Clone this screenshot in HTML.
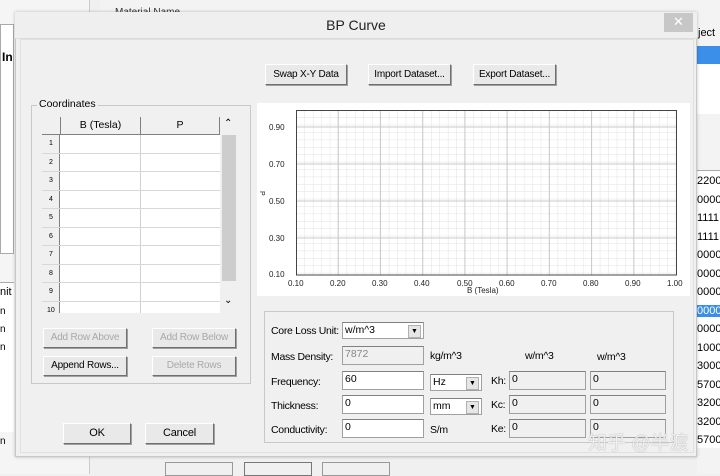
<!DOCTYPE html>
<html><head><meta charset="utf-8"><style>
*{box-sizing:border-box;margin:0;padding:0}
body{width:720px;height:474px;overflow:hidden;background:#f0f0f0;font-family:"Liberation Sans",Arial,sans-serif;font-size:10px;color:#000;position:relative;white-space:nowrap}
.a{position:absolute}
.btn{position:absolute;background:#e9e9e9;border:1px solid #fff;border-right-color:#707070;border-bottom-color:#707070;box-shadow:1px 1px 0 #a0a0a0;text-align:center;font-size:10px;letter-spacing:-0.2px;white-space:nowrap;overflow:hidden}
.dis{color:#a8a8a8}
.fld{position:absolute;background:#fff;border:1px solid #a0a0a0;border-top-color:#808080;padding:1px 2px;font-size:10.5px}
.gf{background:#f0f0f0}
.dd{position:absolute;width:13px;height:13px;right:2px;top:2px;background:#e6e6e6;border:1px solid #b0b0b0;font-size:7px;text-align:center;line-height:11px}
.l{position:absolute;font-size:10.5px;letter-spacing:-0.3px}
</style></head><body>
<div class="a" style="left:0;top:0;width:90px;height:474px;background:#f5f5f5;border-right:1px solid #ccc"></div>
<div class="a" style="left:0;top:24px;width:14px;height:230px;background:#fff;border:1px solid #aaa"></div>
<div class="a" style="left:2px;top:50px;font-weight:bold;font-size:12px">In</div>
<div class="a" style="left:0;top:282px;width:14px;height:150px;background:#fff;border-top:1px solid #aaa"></div>
<div class="a" style="left:0;top:286px;font-size:11px">nit</div>
<div class="a" style="left:0;top:306px">n</div><div class="a" style="left:0;top:324px">n</div><div class="a" style="left:0;top:342px">n</div><div class="a" style="left:0;top:436px">n</div>
<div class="a" style="left:100px;top:0;width:620px;height:12px;background:#f3f3f3"></div>
<div class="a" style="left:115px;top:7px;font-size:10px;color:#333">Material Name</div>
<div class="a" style="left:697px;top:0;width:23px;height:474px;background:#f3f3f3"></div>
<div class="a" style="left:697px;top:46px;width:23px;height:18px;background:#3b8fe8"></div>
<div class="a" style="left:698px;top:27px;font-size:11px">ject</div>
<div class="a" style="left:697px;top:64px;width:23px;height:50px;background:#fff"></div>
<div class="a" style="left:697px;top:170px;width:23px;height:278px;background:#fff;border-top:1px solid #aaa"></div>
<div class="a" style="left:697px;top:172px;line-height:18.5px;font-size:11px">2200<br>0000<br>1111<br>1111<br>0000<br>0000<br>0000<br><span style="background:#3b8fe8;color:#fff">0000</span><br>0000<br>1000<br>3000<br>5700<br>3200<br>3200<br>5700</div>
<div class="a" style="left:165px;top:462px;width:68px;height:14px;border:1px solid #999"></div>
<div class="a" style="left:244px;top:462px;width:68px;height:14px;border:1px solid #777"></div>
<div class="a" style="left:322px;top:462px;width:68px;height:14px;border:1px solid #999"></div>
<div class="a" style="left:15px;top:12px;width:682px;height:445px;background:#f0f0f0;border:1px solid #c8c8c8;box-shadow:0 0 3px rgba(0,0,0,.25)"></div>
<div class="a" style="left:15px;top:12px;width:682px;height:27px;background:#efefef;border-bottom:1px solid #dcdcdc"></div>
<div class="a" style="left:0;top:17px;width:712px;text-align:center;font-size:14px;color:#222">BP Curve</div>
<div class="a" style="left:664px;top:13px;width:29px;height:19px;background:#c7c7c7;color:#fff;text-align:center;font-size:13px;line-height:18px">✕</div>
<div class="a" style="left:20px;top:39px;width:674px;height:414px;border:1px solid #e0e0e0"></div>
<div class="btn" style="left:265px;top:64px;width:82px;height:21px;line-height:19px">Swap X-Y Data</div>
<div class="btn" style="left:368px;top:64px;width:83px;height:21px;line-height:19px">Import Dataset...</div>
<div class="btn" style="left:473px;top:64px;width:83px;height:21px;line-height:19px">Export Dataset...</div>
<div class="a" style="left:31px;top:105px;width:220px;height:279px;border:1px solid #c8c8c8"></div>
<div class="a" style="left:37px;top:98px;background:#f0f0f0;padding:0 2px;font-size:10.5px">Coordinates</div>
<div class="a" style="left:42px;top:117px;width:196px;height:196px;background:#fff;overflow:hidden">
<div class="a" style="left:0;top:0;width:178px;height:18px;background:#f0f0f0;border-bottom:1px solid #808080"></div>
<div class="a" style="left:18px;top:0;width:80px;height:18px;border-left:1px solid #808080;text-align:center;line-height:17px;font-size:10.5px">B (Tesla)</div>
<div class="a" style="left:98px;top:0;width:80px;height:18px;border-left:1px solid #808080;border-right:1px solid #808080;text-align:center;line-height:17px;font-size:10.5px">P</div>
<div class="a" style="left:0;top:18px;width:18px;height:180px;background:#f0f0f0;border-right:1px solid #808080"></div>
<div class="a" style="left:98px;top:18px;width:1px;height:180px;background:#d0d0d0"></div>
<div class="a" style="left:178px;top:0;width:18px;height:196px;background:#f0f0f0"></div>
<div class="a" style="left:180px;top:18px;width:14px;height:146px;background:#cdcdcd"></div>
<div class="a" style="left:182px;top:1px;font-size:10px">⌃</div>
<div class="a" style="left:182px;top:178px;font-size:10px">⌄</div>
<div class="a" style="left:0;top:18px;width:178px;line-height:18.5px;font-size:7px">
<div style="border-bottom:1px solid #d8d8d8;height:18.5px;padding-left:7px">1</div><div style="border-bottom:1px solid #d8d8d8;height:18.5px;padding-left:7px">2</div><div style="border-bottom:1px solid #d8d8d8;height:18.5px;padding-left:7px">3</div><div style="border-bottom:1px solid #d8d8d8;height:18.5px;padding-left:7px">4</div><div style="border-bottom:1px solid #d8d8d8;height:18.5px;padding-left:7px">5</div><div style="border-bottom:1px solid #d8d8d8;height:18.5px;padding-left:7px">6</div><div style="border-bottom:1px solid #d8d8d8;height:18.5px;padding-left:7px">7</div><div style="border-bottom:1px solid #d8d8d8;height:18.5px;padding-left:7px">8</div><div style="border-bottom:1px solid #d8d8d8;height:18.5px;padding-left:7px">9</div><div style="height:18.5px;padding-left:5px">10</div></div>
</div>
<div class="btn dis" style="left:43px;top:328px;width:84px;height:20px;line-height:18px">Add Row Above</div>
<div class="btn dis" style="left:152px;top:328px;width:84px;height:20px;line-height:18px">Add Row Below</div>
<div class="btn" style="left:43px;top:356px;width:84px;height:20px;line-height:18px">Append Rows...</div>
<div class="btn dis" style="left:152px;top:356px;width:84px;height:20px;line-height:18px">Delete Rows</div>
<div class="btn" style="left:63px;top:423px;width:68px;height:21px;line-height:19px;font-size:11px">OK</div>
<div class="btn" style="left:145px;top:423px;width:69px;height:21px;line-height:19px;font-size:11px">Cancel</div>
<div class="a" style="left:257px;top:103px;width:433px;height:193px;background:#fff"></div>
<svg class="a" style="left:257px;top:103px" width="433" height="193">
<defs><pattern id="g" x="39" y="7" width="8.44" height="7.4" patternUnits="userSpaceOnUse"><path d="M0 0V7.4M0 0H8.44" stroke="#e2e2e2" stroke-width="1" fill="none"/></pattern></defs>
<rect x="39" y="7" width="380" height="165" fill="url(#g)"/>
<g stroke="#c8c8c8">
<path d="M81.2 7V172M123.4 7V172M165.7 7V172M207.9 7V172M250.1 7V172M292.3 7V172M334.6 7V172M376.8 7V172"/>
<path d="M39 24H419M39 61H419M39 98H419M39 135H419"/></g>
<rect x="39.5" y="7.5" width="380" height="164.5" fill="none" stroke="#444"/>
<g font-family="Liberation Sans,sans-serif" font-size="8" fill="#222">
<text x="12" y="27">0.90</text><text x="12" y="64">0.70</text><text x="12" y="101">0.50</text><text x="12" y="138">0.30</text><text x="12" y="174">0.10</text>
<text x="3" y="92" font-size="7" transform="rotate(90 5 90)">P</text>
<text x="31" y="183">0.10</text><text x="73" y="183">0.20</text><text x="115" y="183">0.30</text><text x="157" y="183">0.40</text><text x="200" y="183">0.50</text><text x="242" y="183">0.60</text><text x="284" y="183">0.70</text><text x="326" y="183">0.80</text><text x="368" y="183">0.90</text><text x="410" y="183">1.00</text>
<text x="210" y="190">B (Tesla)</text></g>
</svg>
<div class="a" style="left:264px;top:311px;width:410px;height:132px;border:1px solid #c8c8c8"></div>
<div class="l" style="left:271px;top:325px">Core Loss Unit:</div>
<div class="fld" style="left:342px;top:322px;width:82px;height:17px">w/m^3<div class="dd">▼</div></div>
<div class="l" style="left:271px;top:351px">Mass Density:</div>
<div class="fld gf" style="left:342px;top:346px;width:82px;height:19px;color:#888">7872</div>
<div class="l" style="left:430px;top:350px">kg/m^3</div>
<div class="l" style="left:525px;top:350px">w/m^3</div>
<div class="l" style="left:597px;top:351px">w/m^3</div>
<div class="l" style="left:271px;top:376px">Frequency:</div>
<div class="fld" style="left:342px;top:371px;width:82px;height:19px">60</div>
<div class="fld" style="left:430px;top:374px;width:52px;height:17px">Hz<div class="dd">▼</div></div>
<div class="l" style="left:491px;top:375px">Kh:</div>
<div class="fld gf" style="left:509px;top:371px;width:77px;height:19px">0</div>
<div class="fld gf" style="left:590px;top:371px;width:76px;height:19px">0</div>
<div class="l" style="left:271px;top:400px">Thickness:</div>
<div class="fld" style="left:342px;top:395px;width:82px;height:19px">0</div>
<div class="fld" style="left:430px;top:398px;width:52px;height:17px">mm<div class="dd">▼</div></div>
<div class="l" style="left:491px;top:399px">Kc:</div>
<div class="fld gf" style="left:509px;top:395px;width:77px;height:19px">0</div>
<div class="fld gf" style="left:590px;top:395px;width:76px;height:19px">0</div>
<div class="l" style="left:271px;top:424px">Conductivity:</div>
<div class="fld" style="left:342px;top:419px;width:82px;height:19px">0</div>
<div class="l" style="left:430px;top:424px">S/m</div>
<div class="l" style="left:491px;top:423px">Ke:</div>
<div class="fld gf" style="left:509px;top:419px;width:77px;height:19px">0</div>
<div class="fld gf" style="left:590px;top:419px;width:76px;height:19px">0</div>
<div class="a" style="left:588px;top:428px;font-family:'Liberation Sans','Noto Sans CJK SC',sans-serif;font-size:19px;color:rgba(255,255,255,.85);text-shadow:0 0 1px #888">知乎 @半渡</div>
</body></html>
